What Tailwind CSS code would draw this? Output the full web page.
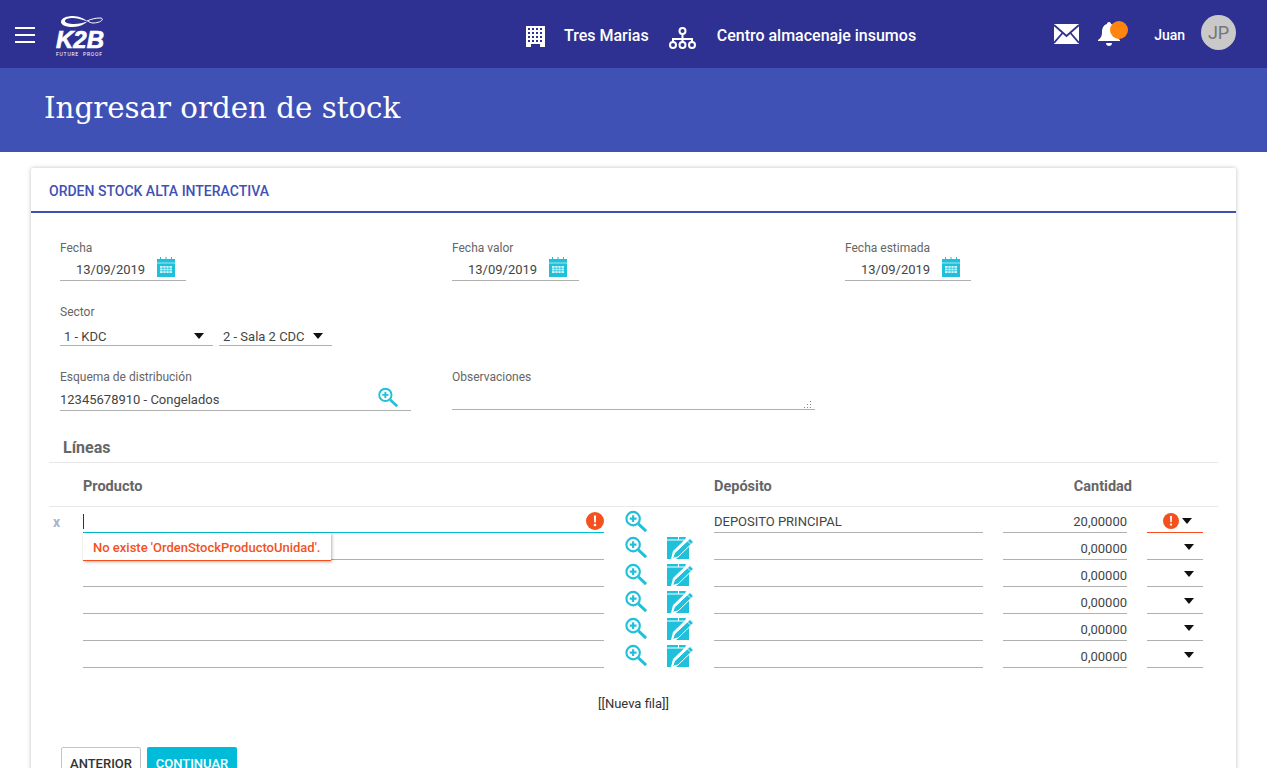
<!DOCTYPE html>
<html lang="es">
<head>
  <meta charset="UTF-8">
  <title>Ingresar orden de stock</title>
  <script src="https://cdn.jsdelivr.net/npm/@tailwindcss/browser@4"></script>
</head>
<body class="bg-white h-[768px] overflow-hidden font-['Roboto',sans-serif] text-[13px] text-[#444]">
  <svg class="hidden">
    <symbol id="lupa" viewBox="0 0 24 24">
      <circle cx="9" cy="9" r="7" fill="none" stroke="#1fc0da" stroke-width="2.2"/>
      <path d="M9 5.500v7M5.500 9h7" stroke="#1fc0da" stroke-width="2.2"/>
      <path d="M14.500 14.500l8 7.500" stroke="#1fc0da" stroke-width="3"/>
    </symbol>
    <symbol id="editar" viewBox="0 0 27 23">
      <path d="M0 0h11v2.500H0zM12 0h7l-1 2.500h-6z" fill="#1fc0da"/>
      <path d="M0 3.500h17L6 14l-2 8H0zM9 22l13-13v13z" fill="#1fc0da"/>
      <path d="M23 1.500L26.500 5 11 20l-5.500 1.500L7.500 16z" fill="#1fc0da" stroke="#fff" stroke-width="1"/>
      <path d="M20.500 4l3.500 3.500" stroke="#fff" stroke-width=".8"/>
    </symbol>
    <symbol id="calendario" viewBox="0 0 18 20">
      <path d="M3 0h1v3H3zM8.500 0h1v3h-1zM14 0h1v3h-1z" fill="#1fc0da"/>
      <path d="M0 2h18v18H0z" fill="#1fc0da"/>
      <path d="M0 6h18" stroke="#fff" stroke-width=".6"/>
      <path d="M3 9h12v7H3z" fill="#d8f4f8"/>
      <path d="M3 11.300h12M3 13.700h12M6 9v7M9 9v7M12 9v7" stroke="#1fc0da" stroke-width=".7"/>
    </symbol>
    <symbol id="alerta" viewBox="0 0 18 18">
      <circle cx="9" cy="9" r="9" fill="#f4511e"/>
      <path d="M7.900 3.500h2.200l-.3 7H8.200z" fill="#fff"/>
      <circle cx="9" cy="13" r="1.300" fill="#fff"/>
    </symbol>
    <symbol id="flecha" viewBox="0 0 10 6">
      <path d="M0 0h10L5 6z" fill="#111"/>
    </symbol>
  </svg>

  <div class="w-[1267px]">
    <!-- Top bar -->
    <header class="h-[68px] bg-[#2e3192] flex items-center text-white">
      <div class="w-[20px] ml-[15px] mt-[2px] flex flex-col gap-[5px]">
        <span class="h-[2px] bg-white"></span>
        <span class="h-[2px] bg-white"></span>
        <span class="h-[2px] bg-white"></span>
      </div>
      <div class="w-[50px] ml-[21px] mt-[5px] flex flex-col items-start">
        <svg width="42" height="11" viewBox="0 0 42 11" class="ml-[5px]">
          <path d="M0 6C0 2 6 0 12 0c6 0 11 3 15 5-4 0-9-3-15-3-5 0-8 1-8 3 0 2 4 3 9 3 5 0 10-1 14-3-3 3-9 6-15 6C5 11 0 9 0 6z" fill="#fff"/>
          <path d="M26 5c4-2 9-3 13-3 2 0 3 1 2 2-1 2-6 3-9 3-2 0-4-1-5-2" fill="none" stroke="#fff"/>
        </svg>
        <span class="block mt-[2px] text-[24px] leading-[21px] font-bold italic font-['Liberation_Sans',sans-serif] [-webkit-text-stroke:0.7px_white]">K2B</span>
        <span class="block mt-[1px] text-[5px] leading-[6px] tracking-[.8px] whitespace-nowrap">FUTURE&nbsp;&nbsp;PROOF</span>
      </div>
      <svg width="19" height="21" viewBox="0 0 19 21" class="ml-[420px] mt-[5px]">
        <path fill-rule="evenodd" d="M0 0h19v21h-5v-3H5v3H0zM2 2v2h2V2zm4 0v2h2V2zm4 0v2h2V2zm4 0v2h2V2zM2 6v2h2V6zm4 0v2h2V6zm4 0v2h2V6zm4 0v2h2V6zM2 10v2h2v-2zm4 0v2h2v-2zm4 0v2h2v-2zm4 0v2h2v-2zM2 14v2h2v-2zm4 0v2h2v-2zm4 0v2h2v-2zm4 0v2h2v-2z" fill="#fff"/>
      </svg>
      <span class="ml-[19px] mt-[4px] text-[16px] font-medium">Tres Marias</span>
      <svg width="27" height="22" viewBox="0 0 27 22" class="ml-[20px] mt-[7px]" fill="none" stroke="#fff" stroke-width="2">
        <circle cx="13.500" cy="4" r="3"/>
        <circle cx="4" cy="18" r="3"/>
        <circle cx="13.500" cy="18" r="3"/>
        <circle cx="23" cy="18" r="3"/>
        <path d="M13.500 7v8M4 15v-3h19v3"/>
      </svg>
      <span class="ml-[21px] mt-[4px] text-[16px] font-medium">Centro almacenaje insumos</span>
      <svg width="25" height="20" viewBox="0 0 25 20" class="ml-[138px]">
        <path d="M0 0h25v20H0z" fill="#fff"/>
        <path d="M0 1l12.500 11L25 1M0 19l8.500-10M25 19l-8.500-10" fill="none" stroke="#2e3192" stroke-width="1.800"/>
      </svg>
      <div class="relative w-[23px] h-[26px] ml-[19px]">
        <svg width="23" height="26" viewBox="0 0 23 26">
          <path d="M11 1c1.500 0 2 1 2 2 4 1 5 5 5 8 0 4 1 6 4 8v1H0v-1c3-2 4-4 4-8 0-3 1-7 5-8 0-1 .5-2 2-2z" fill="#fff"/>
          <path d="M8 22h6c0 2-1.500 3-3 3s-3-1-3-3z" fill="#fff"/>
        </svg>
        <span class="absolute left-[12px] top-[0px] w-[18px] h-[18px] rounded-full bg-[#ff8510]"></span>
      </div>
      <span class="ml-[33px] mt-[2px] text-[14px] font-medium">Juan</span>
      <span class="ml-[16px] -mt-[3px] w-[35px] h-[35px] rounded-full bg-[#c9c9c9] text-[#757575] text-[18px] flex items-center justify-center">JP</span>
    </header>

    <!-- Title band -->
    <div class="h-[84px] bg-[#3f51b5] pl-[44px] pb-[2px] flex items-center">
      <h1 class="text-white text-[29.300px] font-['DejaVu_Serif',serif] font-normal">Ingresar orden de stock</h1>
    </div>

    <!-- Card -->
    <main class="mt-[16px] ml-[31px] w-[1205px] bg-white shadow-[0_0_4px_rgba(0,0,0,.25)] rounded-t-[2px] h-[640px]">
      <div class="h-[45px] pt-[4px] border-b-2 border-[#3f51b5] pl-[18px] flex items-center text-[#3f51b5] text-[14px] font-medium">ORDEN STOCK ALTA INTERACTIVA</div>

      <section class="pl-[29px] pt-[28px]">
        <!-- Dates -->
        <div class="flex h-[43px]">
          <div class="w-[392px]">
            <label class="block text-[12px] leading-[14px] text-[#666]">Fecha</label>
            <div class="w-[126px] h-[26px] pt-[4px] border-b border-[#b0b0b0] flex items-center pl-[16px] gap-[12px]">13/09/2019
              <svg width="18" height="20" class="mb-[5px]"><use href="#calendario"/></svg>
            </div>
          </div>
          <div class="w-[393px]">
            <label class="block text-[12px] leading-[14px] text-[#666]">Fecha valor</label>
            <div class="w-[127px] h-[26px] pt-[4px] border-b border-[#b0b0b0] flex items-center pl-[16px] gap-[12px]">13/09/2019
              <svg width="18" height="20" class="mb-[5px]"><use href="#calendario"/></svg>
            </div>
          </div>
          <div>
            <label class="block text-[12px] leading-[14px] text-[#666]">Fecha estimada</label>
            <div class="w-[126px] h-[26px] pt-[4px] border-b border-[#b0b0b0] flex items-center pl-[16px] gap-[12px]">13/09/2019
              <svg width="18" height="20" class="mb-[5px]"><use href="#calendario"/></svg>
            </div>
          </div>
        </div>

        <!-- Sector -->
        <div class="mt-[21px]">
          <label class="block text-[12px] leading-[14px] text-[#666]">Sector</label>
          <div class="mt-[6px] flex gap-[6px]">
            <div class="w-[153px] h-[21px] pt-[4px] border-b border-[#b0b0b0] flex items-center justify-between pl-[4px] pr-[9px]">1 - KDC
              <svg width="10" height="6" class="mb-[3px]"><use href="#flecha"/></svg>
            </div>
            <div class="w-[113px] h-[21px] pt-[4px] border-b border-[#b0b0b0] flex items-center justify-between pl-[4px] pr-[9px]">2 - Sala 2 CDC
              <svg width="10" height="6" class="mb-[3px]"><use href="#flecha"/></svg>
            </div>
          </div>
        </div>

        <!-- Esquema / Observaciones -->
        <div class="mt-[24px] flex">
          <div class="w-[351px] mr-[41px]">
            <label class="block text-[12px] leading-[14px] text-[#666]">Esquema de distribución</label>
            <div class="h-[27px] border-b border-[#b0b0b0] flex items-center justify-between pr-[12px]">
              <span class="mt-[5px]">12345678910 - Congelados</span>
              <svg width="22" height="21"><use href="#lupa"/></svg>
            </div>
          </div>
          <div class="w-[363px]">
            <label class="block text-[12px] leading-[14px] text-[#666]">Observaciones</label>
            <div class="relative h-[26px] border-b border-[#b0b0b0]">
              <svg width="8" height="8" viewBox="0 0 8 8" class="absolute right-[3px] bottom-[1px]" fill="#888">
                <path d="M0 7h1v1H0zM3 7h1v1H3zM6 7h1v1H6zM3 4h1v1H3zM6 4h1v1H6zM6 1h1v1H6z"/>
              </svg>
            </div>
          </div>
        </div>
      </section>

      <!-- Lineas -->
      <section class="ml-[18px] w-[1169px]">
        <h2 class="mt-[26px] pt-[1px] pl-[14px] h-[26px] border-b border-[#e8e8e8] text-[16px] leading-[20px] font-bold text-[#666]">Líneas</h2>

        <div class="h-[44px] pt-[4px] border-b border-[#e8e8e8] grid grid-cols-[34px_521px_110px_288px_130px] items-center text-[14.500px] font-bold text-[#666]">
          <span></span>
          <span>Producto</span>
          <span></span>
          <span>Depósito</span>
          <span class="text-right whitespace-nowrap">Cantidad</span>
        </div>

        <div class="relative">
          <div class="h-[26px] grid grid-cols-[34px_521px_20px_43px_47px_269px_20px_124px_20px_56px]">
            <span class="text-[#a9b4cc] text-[14px] font-bold pl-[4px] pt-[5px] leading-[20px]">x</span>
            <div class="pt-[3px] border-b border-[#00bcd4] flex items-center justify-between">
              <span class="w-[1px] h-[15px] bg-[#333]"></span>
              <svg width="18" height="18"><use href="#alerta"/></svg>
            </div>
            <span></span>
            <svg width="24" height="23" class="mt-[3px]"><use href="#lupa"/></svg>
            <span></span>
            <div class="border-b border-[#b0b0b0] pt-[7px] leading-[15px]">DEPOSITO PRINCIPAL</div>
            <span></span>
            <div class="border-b border-[#b0b0b0] text-right pt-[7px] leading-[15px]">20,00000</div>
            <span></span>
            <div class="pt-[2px] border-b border-[#f4511e] flex items-center justify-end pr-[11px] gap-[3px]">
              <svg width="16" height="16"><use href="#alerta"/></svg>
              <svg width="10" height="6"><use href="#flecha"/></svg>
            </div>
          </div>

          <div class="mt-[1px] h-[26px] grid grid-cols-[34px_521px_20px_43px_47px_269px_20px_124px_20px_56px]">
            <span></span><div class="border-b border-[#b0b0b0]"></div><span></span>
            <svg width="24" height="23" class="mt-[2px]"><use href="#lupa"/></svg>
            <svg width="27" height="23" class="mt-[3px]"><use href="#editar"/></svg>
            <div class="border-b border-[#b0b0b0]"></div><span></span>
            <div class="border-b border-[#b0b0b0] text-right pt-[7px] leading-[15px]">0,00000</div><span></span>
            <div class="border-b border-[#b0b0b0] flex items-center justify-end pr-[9px]"><svg width="10" height="6"><use href="#flecha"/></svg></div>
          </div>
          <div class="mt-[1px] h-[26px] grid grid-cols-[34px_521px_20px_43px_47px_269px_20px_124px_20px_56px]">
            <span></span><div class="border-b border-[#b0b0b0]"></div><span></span>
            <svg width="24" height="23" class="mt-[2px]"><use href="#lupa"/></svg>
            <svg width="27" height="23" class="mt-[3px]"><use href="#editar"/></svg>
            <div class="border-b border-[#b0b0b0]"></div><span></span>
            <div class="border-b border-[#b0b0b0] text-right pt-[7px] leading-[15px]">0,00000</div><span></span>
            <div class="border-b border-[#b0b0b0] flex items-center justify-end pr-[9px]"><svg width="10" height="6"><use href="#flecha"/></svg></div>
          </div>
          <div class="mt-[1px] h-[26px] grid grid-cols-[34px_521px_20px_43px_47px_269px_20px_124px_20px_56px]">
            <span></span><div class="border-b border-[#b0b0b0]"></div><span></span>
            <svg width="24" height="23" class="mt-[2px]"><use href="#lupa"/></svg>
            <svg width="27" height="23" class="mt-[3px]"><use href="#editar"/></svg>
            <div class="border-b border-[#b0b0b0]"></div><span></span>
            <div class="border-b border-[#b0b0b0] text-right pt-[7px] leading-[15px]">0,00000</div><span></span>
            <div class="border-b border-[#b0b0b0] flex items-center justify-end pr-[9px]"><svg width="10" height="6"><use href="#flecha"/></svg></div>
          </div>
          <div class="mt-[1px] h-[26px] grid grid-cols-[34px_521px_20px_43px_47px_269px_20px_124px_20px_56px]">
            <span></span><div class="border-b border-[#b0b0b0]"></div><span></span>
            <svg width="24" height="23" class="mt-[2px]"><use href="#lupa"/></svg>
            <svg width="27" height="23" class="mt-[3px]"><use href="#editar"/></svg>
            <div class="border-b border-[#b0b0b0]"></div><span></span>
            <div class="border-b border-[#b0b0b0] text-right pt-[7px] leading-[15px]">0,00000</div><span></span>
            <div class="border-b border-[#b0b0b0] flex items-center justify-end pr-[9px]"><svg width="10" height="6"><use href="#flecha"/></svg></div>
          </div>
          <div class="mt-[1px] h-[26px] grid grid-cols-[34px_521px_20px_43px_47px_269px_20px_124px_20px_56px]">
            <span></span><div class="border-b border-[#b0b0b0]"></div><span></span>
            <svg width="24" height="23" class="mt-[2px]"><use href="#lupa"/></svg>
            <svg width="27" height="23" class="mt-[3px]"><use href="#editar"/></svg>
            <div class="border-b border-[#b0b0b0]"></div><span></span>
            <div class="border-b border-[#b0b0b0] text-right pt-[7px] leading-[15px]">0,00000</div><span></span>
            <div class="border-b border-[#b0b0b0] flex items-center justify-end pr-[9px]"><svg width="10" height="6"><use href="#flecha"/></svg></div>
          </div>

          <!-- Error tooltip -->
          <div class="absolute left-[34px] top-[26px] w-[248px] h-[28px] bg-white border-b border-[#f4511e] shadow-[1px_1px_3px_rgba(0,0,0,.3)] pl-[10px] pt-[7px] text-[13px] leading-[15px] font-medium text-[#f4511e] whitespace-nowrap">No existe 'OrdenStockProductoUnidad'.</div>
        </div>

        <div class="mt-[28px] pl-[549px] text-[13px] leading-[16px] text-[#333]">[[Nueva fila]]</div>
      </section>

      <div class="mt-[35px] ml-[30px] flex gap-[6px]">
        <button class="w-[80px] h-[34px] border border-[#c4c4c4] rounded-[2px] bg-white text-[#333] text-[13px] font-medium">ANTERIOR</button>
        <button class="w-[90px] h-[34px] rounded-[2px] bg-[#00bcd9] text-white text-[13px] font-medium">CONTINUAR</button>
      </div>
    </main>
  </div>
</body>
</html>
